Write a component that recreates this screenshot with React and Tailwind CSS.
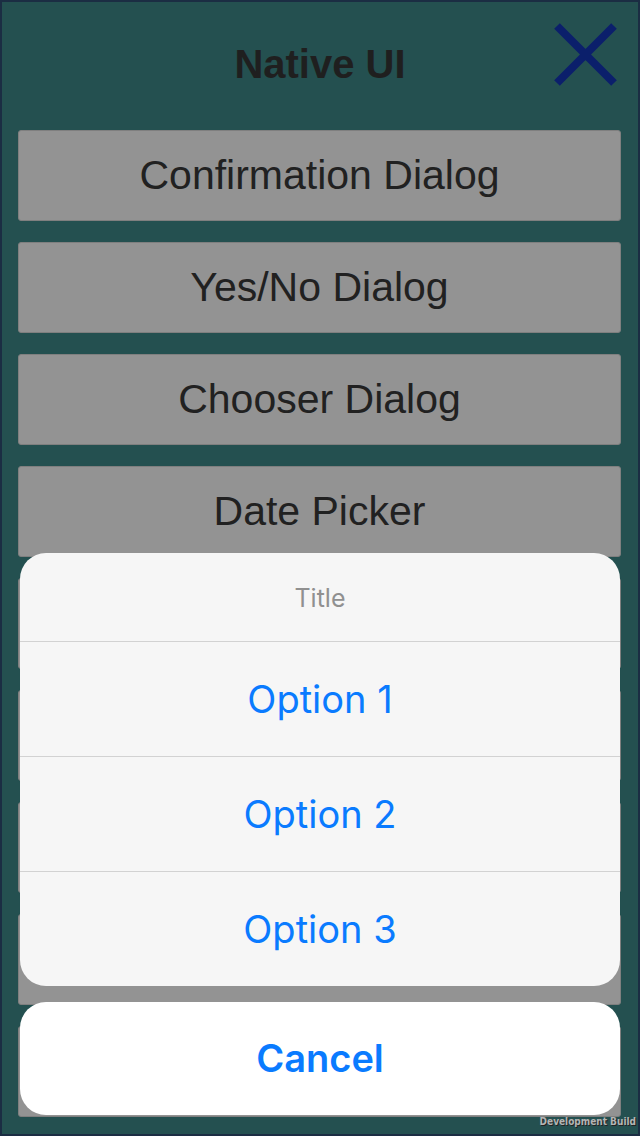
const buttons = [
  'Confirmation Dialog',
  'Yes/No Dialog',
  'Chooser Dialog',
  'Date Picker',
  '',
  '',
  '',
  '',
  '',
]

const options = ['Option 1', 'Option 2', 'Option 3']

export default function App() {
  return (
    <div className="relative w-[640px] h-[1136px] overflow-hidden border-2 border-[#1b2d43] bg-[#245050]">
      <div className="relative flex h-[128px] items-center justify-center">
        <span className="text-[40px] font-bold text-[#1f1f1f] -mt-[4px]" style={{ fontFamily: '"Liberation Sans", Arial, sans-serif' }}>
          Native UI
        </span>
        <svg className="absolute left-[552px] top-[21px] w-[63px] h-[63px]" viewBox="0 0 63 63">
          <path d="M3 3 L60 60 M60 3 L3 60" stroke="#0b1f6b" strokeWidth="8" fill="none" />
        </svg>
      </div>

      <div className="flex flex-col gap-[21px] ml-[16px] mr-[17px]">
        {buttons.map((b, i) => (
          <div
            key={i}
            className="flex h-[91px] items-center justify-center rounded-[3px] border border-[#7f7f7f] bg-[#939393] text-[41px] text-[#212121]"
            style={{ fontFamily: '"Liberation Sans", Arial, sans-serif' }}
          >
            {b}
          </div>
        ))}
      </div>

      <div className="absolute left-[18px] right-[18px] top-[551px] flex flex-col gap-[16px]" style={{ fontFamily: 'Inter, Roboto, sans-serif' }}>
        <div className="flex flex-col rounded-[26px] bg-[#f6f6f6] overflow-hidden">
          <div className="flex h-[88px] items-center justify-center pt-[3px] text-[25px] text-[#909090]">Title</div>
          {options.map(o => (
            <div key={o} className="flex h-[115px] items-center justify-center border-t border-[#d2d2d2] text-[38px] text-[#0a7bff]">
              {o}
            </div>
          ))}
        </div>
        <div className="flex h-[113px] items-center justify-center rounded-[26px] bg-white text-[38px] font-semibold text-[#0a7bff]">
          Cancel
        </div>
      </div>

      <div
        className="absolute right-[2px] bottom-[5px] text-[10px] font-bold text-[#b4b4b4] [text-shadow:1px_1px_0_#222]"
        style={{ fontFamily: '"DejaVu Sans Condensed", "DejaVu Sans", sans-serif' }}
      >
        Development Build
      </div>
    </div>
  )
}
